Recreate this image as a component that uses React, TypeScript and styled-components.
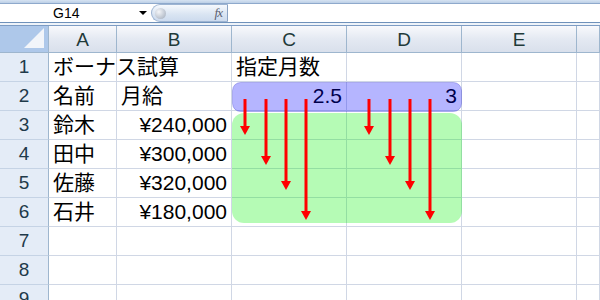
import * as React from 'react'
import styled, { createGlobalStyle } from 'styled-components'

// ***** Global
const GlobalStyle = createGlobalStyle`
  html, body {
    margin: 0;
    padding: 0;
    background: #ffffff;
    overflow: hidden;
  }
  body {
    font-family: "Liberation Sans", "Noto Sans CJK JP", sans-serif;
  }
`

// ***** Styled Components
const Window = styled.div`
  position: relative;
  width: 600px;
  height: 300px;
  overflow: hidden;
  background: #ffffff;
`

const TopStrip = styled.div`
  height: 3px;
  background: linear-gradient(#d6e3f2, #bccfe6);
  border-bottom: 1px solid #8ea9cc;
`

const FormulaBar = styled.div`
  display: flex;
  height: 18px;
  background: #ffffff;
  border-bottom: 1px solid #6f91ba;
`

const NameBox = styled.div`
  display: flex;
  align-items: center;
  width: 151px;
  padding-left: 53px;
  box-sizing: border-box;
  font-size: 14px;
  color: #000;
  position: relative;
`

const DropArrow = styled.span`
  position: absolute;
  left: 139px;
  top: 7px;
  width: 0;
  height: 0;
  border-left: 4px solid transparent;
  border-right: 4px solid transparent;
  border-top: 4px solid #000;
`

const FxPill = styled.div`
  display: flex;
  align-items: center;
  justify-content: space-between;
  width: 77px;
  height: 18px;
  box-sizing: border-box;
  padding: 0 5px 0 3px;
  border: 1px solid #9db4d2;
  border-right: 1px solid #8aa3c4;
  border-radius: 9px 0 0 9px;
  background: linear-gradient(#f6f9fd, #d9e4f2 60%, #cddbee);
`

const Ball = styled.span`
  width: 11px;
  height: 11px;
  border-radius: 50%;
  background: radial-gradient(circle at 35% 35%, #f4f6f9, #b8c0cc 70%, #98a2b0);
`

const Fx = styled.span`
  font-family: "Liberation Serif", serif;
  font-style: italic;
  font-size: 13px;
  color: #5a6070;
  letter-spacing: -1px;
`

const FormulaInput = styled.div`
  flex: 1;
`

const Gap = styled.div`
  height: 2px;
  background: #eef3f9;
  border-bottom: 1px solid #7d9cc4;
`

const Sheet = styled.div`
  display: grid;
  grid-template-columns: 49px 68px 115px 115px 115px 115px 23px;
  grid-template-rows: 27px repeat(9, 29px);
`

const Corner = styled.div`
  position: relative;
  background: #aec8ea;
  border-right: 1px solid #9eb6ce;
  border-bottom: 1px solid #9eb6ce;
  box-sizing: border-box;
  &::after {
    content: '';
    position: absolute;
    right: 4px;
    bottom: 4px;
    width: 0;
    height: 0;
    border-left: 20px solid transparent;
    border-bottom: 20px solid #f2f5fa;
  }
`

const ColHeader = styled.div`
  display: flex;
  align-items: center;
  justify-content: center;
  background: linear-gradient(#f8f9fc, #e4e9f2 50%, #d9e0ec);
  border-right: 1px solid #9eb6ce;
  border-bottom: 1px solid #9eb6ce;
  box-sizing: border-box;
  font-size: 19px;
  color: #1f3a3a;
  padding-top: 2px;
`

const RowHeader = styled.div`
  display: flex;
  align-items: center;
  justify-content: center;
  background: #e4ecf7;
  border-right: 1px solid #9eb6ce;
  border-bottom: 1px solid #c5d3e5;
  box-sizing: border-box;
  font-size: 19px;
  color: #1f3a4a;
`

const Cell = styled.div<{ $align?: 'left' | 'right' }>`
  display: flex;
  align-items: flex-end;
  justify-content: ${(p) => (p.$align === 'right' ? 'flex-end' : 'flex-start')};
  padding: 0 4px 2px 4px;
  border-right: 1px solid #d0d7e5;
  border-bottom: 1px solid #d0d7e5;
  box-sizing: border-box;
  font-size: 21px;
  line-height: 24px;
  color: #000;
  white-space: nowrap;
  overflow: visible;
`

const Overlay = styled.svg`
  position: absolute;
  left: 0;
  top: 0;
  pointer-events: none;
`

// ***** Data
const COLS = ['A', 'B', 'C', 'D', 'E', '']

type Row = { a?: string; b?: string; c?: string; d?: string; bRight?: boolean; num?: boolean }

const ROWS: Row[] = [
  { a: 'ボーナス試算', c: '指定月数' },
  { a: '名前', b: '月給', c: '2.5', d: '3', num: true },
  { a: '鈴木', b: '¥240,000', bRight: true },
  { a: '田中', b: '¥300,000', bRight: true },
  { a: '佐藤', b: '¥320,000', bRight: true },
  { a: '石井', b: '¥180,000', bRight: true },
  {},
  {},
  {},
]

const ARROW_TIPS = [135, 165, 190, 220]
const ARROW_X = [
  [245, 266, 286, 306],
  [369, 390, 410, 430],
]

const Arrow = ({ x, tip }: { x: number; tip: number }) => (
  <g>
    <line x1={x} y1={99} x2={x} y2={tip - 8} stroke="#ff0000" strokeWidth={3} />
    <polygon points={`${x - 5},${tip - 9} ${x + 5},${tip - 9} ${x},${tip}`} fill="#ff0000" />
  </g>
)

// ***** Component
export default function App() {
  return (
    <Window>
      <GlobalStyle />
      <TopStrip />
      <FormulaBar>
        <NameBox>
          G14
          <DropArrow />
        </NameBox>
        <FxPill>
          <Ball />
          <Fx>fx</Fx>
        </FxPill>
        <FormulaInput />
      </FormulaBar>
      <Gap />
      <Sheet>
        <Corner />
        {COLS.map((c, i) => (
          <ColHeader key={i}>{c}</ColHeader>
        ))}
        {ROWS.map((r, i) => (
          <React.Fragment key={i}>
            <RowHeader>{i + 1}</RowHeader>
            <Cell>{r.a}</Cell>
            <Cell $align={r.bRight ? 'right' : 'left'}>{r.b}</Cell>
            <Cell $align={r.num ? 'right' : 'left'}>{r.c}</Cell>
            <Cell $align="right">{r.d}</Cell>
            <Cell />
            <Cell />
          </React.Fragment>
        ))}
      </Sheet>
      <Overlay width={600} height={300} viewBox="0 0 600 300">
        <rect
          x={232.5}
          y={82.5}
          width={229}
          height={29}
          rx={8}
          fill="rgba(0,0,255,0.29)"
          stroke="rgba(60,60,200,0.3)"
        />
        <rect x={232} y={113} width={230} height={110} rx={12} fill="rgba(0,240,0,0.29)" />
        {ARROW_X.map((group, g) =>
          group.map((x, i) => <Arrow key={`${g}-${i}`} x={x} tip={ARROW_TIPS[i]} />)
        )}
      </Overlay>
    </Window>
  )
}
